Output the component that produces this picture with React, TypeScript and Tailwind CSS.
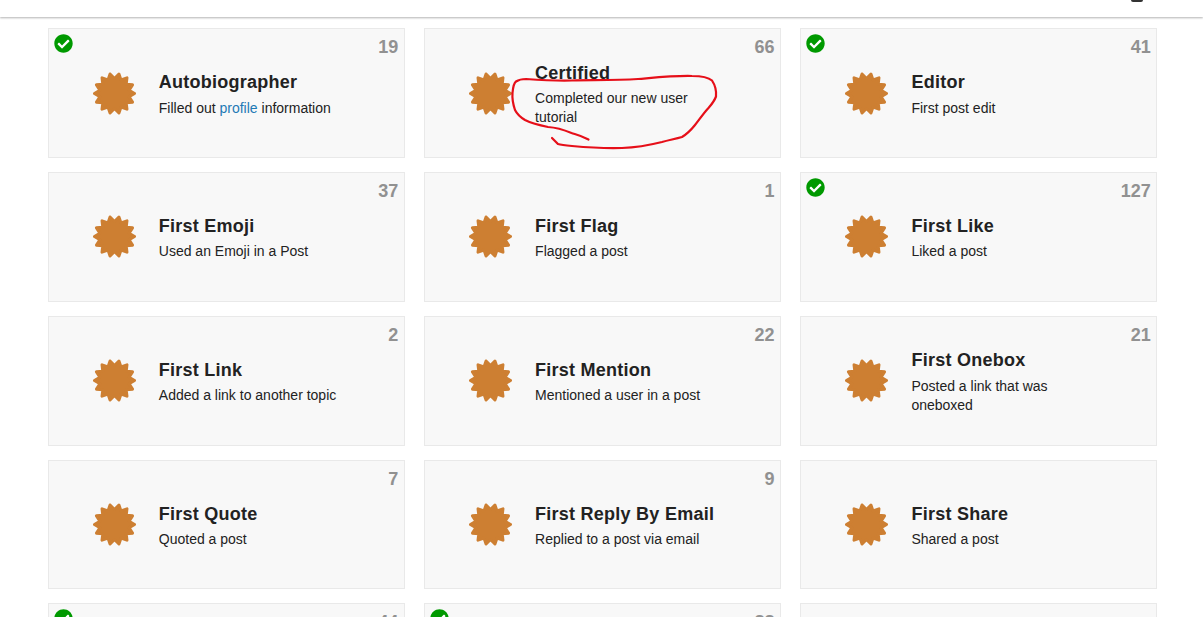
import { FaCheckCircle } from "react-icons/fa";
import type { ReactNode } from "react";

type Badge = {
  title: string;
  description: ReactNode;
  count?: number;
  granted?: boolean;
};

const badges: Badge[] = [
  {
    title: "Autobiographer",
    description: (
      <>
        Filled out <a href="#profile" className="text-[#1f7ab5]">profile</a> information
      </>
    ),
    count: 19,
    granted: true,
  },
  { title: "Certified", description: "Completed our new user tutorial", count: 66 },
  { title: "Editor", description: "First post edit", count: 41, granted: true },
  { title: "First Emoji", description: "Used an Emoji in a Post", count: 37 },
  { title: "First Flag", description: "Flagged a post", count: 1 },
  { title: "First Like", description: "Liked a post", count: 127, granted: true },
  { title: "First Link", description: "Added a link to another topic", count: 2 },
  { title: "First Mention", description: "Mentioned a user in a post", count: 22 },
  { title: "First Onebox", description: "Posted a link that was oneboxed", count: 21 },
  { title: "First Quote", description: "Quoted a post", count: 7 },
  { title: "First Reply By Email", description: "Replied to a post via email", count: 9 },
  { title: "First Share", description: "Shared a post" },
  { title: "", description: "", count: 44, granted: true },
  { title: "", description: "", count: 88, granted: true },
  { title: "", description: "" },
];

// 14 pointed star, a tip pointing left and right; the round stroke softens the tips
const starPath = () => {
  const points = 14;
  const c = 21.5;
  const tip = 20;
  const dip = 15;
  const at = (r: number, step: number) => {
    const a = (step / points) * Math.PI * 2;
    return `${(c + r * Math.cos(a)).toFixed(2)} ${(c + r * Math.sin(a)).toFixed(2)}`;
  };
  let d = "";
  for (let i = 0; i < points; i++) {
    d += `${i === 0 ? "M" : "L"}${at(tip, i)}L${at(dip, i + 0.5)}`;
  }
  return d + "Z";
};

const BadgeIcon = () => (
  <svg width="43" height="43" viewBox="0 0 43 43" className="shrink-0">
    <path d={starPath()} fill="#cd7f32" stroke="#cd7f32" strokeWidth="3" strokeLinejoin="round" />
  </svg>
);

const BadgeCard = ({ badge }: { badge: Badge }) => (
  <div className="relative flex items-center gap-[23px] pl-[44px] bg-[#f8f8f8] border border-[#e9e9e9]">
    {badge.granted && (
      <span className="absolute left-[5px] top-[5px] w-[19px] h-[19px] rounded-full bg-white">
        <FaCheckCircle size={19} color="#009900" />
      </span>
    )}
    {badge.count !== undefined && (
      <span className="absolute right-[5.5px] top-[7px] text-[18px] leading-[22px] font-bold text-[#919191]">
        {badge.count}
      </span>
    )}
    {badge.title && (
      <>
        <BadgeIcon />
        <div className="w-[190px] pt-[2.6px]">
          <h3 className="text-[18px] leading-[22px] font-bold tracking-[0.25px] text-[#222222] mb-[5.5px]">{badge.title}</h3>
          <p className="text-[14px] leading-[19px] text-[#222222]">{badge.description}</p>
        </div>
      </>
    )}
  </div>
);

const App = () => {
  return (
    <div className="relative h-[617px] overflow-hidden bg-white font-['Liberation_Sans',Arial,sans-serif]">
      <header className="h-[17px] flex justify-end pr-[60px] bg-white shadow-[0_1px_2px_rgba(0,0,0,0.3)]">
        <span className="w-[12px] h-[2px] rounded-b-full bg-[#333333]" />
      </header>
      <main className="grid grid-cols-[357px_357px_357px] auto-rows-[129.8px] gap-x-[19.3px] gap-y-[14px] pl-[47.8px] pt-[11.2px]">
        {badges.map((badge, i) => (
          <BadgeCard key={i} badge={badge} />
        ))}
      </main>

      {/* red marker scribble drawn over the Certified card */}
      <svg width="1203" height="617" className="absolute left-0 top-0 pointer-events-none">
        <path
          d="M588.5 139.5C580 135 576 134.5 571.5 133C563 129.5 556 127.5 548 127C538 125 531 123 525 120C520 117 517 114 515 110C513 104 512 99 512.5 93C513 87 514 83 516 81.5C519 79.5 522 79 526 79C540 80 556 81 572 80.5C594 80 616 80.5 638 79C656 77.5 675 75.5 692 76C702 76 708 77 712 80.5C715 85 716.5 91 716 96.5C714 102 711 105 708 108.5C703 114 699 120 695 125C691 130 687 134 682 137C675 139 669 140 662 142C650 145 636 147.5 622 148C605 148.5 588 147.5 572 146C566 145.5 561 145 558 144C556 142 554 140 552 138"
          fill="none"
          stroke="#e60f19"
          strokeWidth="2.2"
          strokeLinecap="round"
        />
      </svg>
    </div>
  );
};

export default App;
